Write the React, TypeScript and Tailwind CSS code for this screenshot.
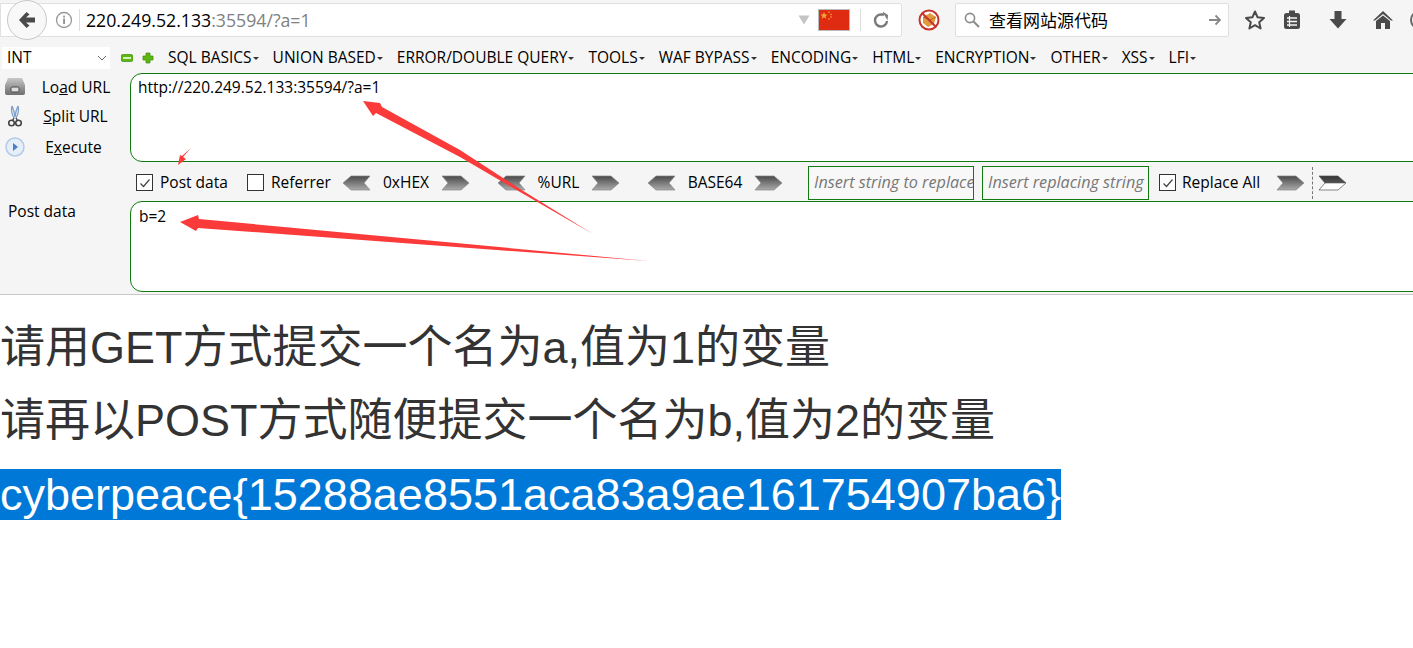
import React from "react";

const menus = ["SQL BASICS", "UNION BASED", "ERROR/DOUBLE QUERY", "TOOLS", "WAF BYPASS", "ENCODING", "HTML", "ENCRYPTION", "OTHER", "XSS", "LFI"];

function Chevron({ dir = "right", hollow = false }: { dir?: "left" | "right"; hollow?: boolean }) {
  const id = `g-${dir}-${hollow ? "h" : "s"}`;
  const pts = dir === "right" ? "1,1 20,1 28,8 20,15 1,15 7,8" : "27,1 8,1 0,8 8,15 27,15 21,8";
  return (
    <svg width="28" height="16" viewBox="0 0 28 16" className="shrink-0">
      <defs>
        <linearGradient id={id} x1="0" y1="0" x2="0" y2="1">
          {hollow ? (
            <>
              <stop offset="0" stopColor="#333" />
              <stop offset="0.5" stopColor="#555" />
              <stop offset="0.55" stopColor="#fff" />
              <stop offset="1" stopColor="#fff" />
            </>
          ) : (
            <>
              <stop offset="0" stopColor="#4a4a4a" />
              <stop offset="1" stopColor="#aaa" />
            </>
          )}
        </linearGradient>
      </defs>
      <polygon points={pts} fill={`url(#${id})`} stroke={hollow ? "#555" : "#888"} strokeWidth="0.7" />
    </svg>
  );
}

function Check({ checked }: { checked?: boolean }) {
  return (
    <span className="w-[17px] h-[17px] border border-[#333] bg-white flex items-center justify-center shrink-0">
      {checked && (
        <svg width="12" height="12" viewBox="0 0 12 12">
          <path d="M1.5 6.5 L4.5 9.5 L10.5 2.5" fill="none" stroke="#444" strokeWidth="1.2" />
        </svg>
      )}
    </span>
  );
}

function Encoder({ label, className }: { label: string; className: string }) {
  return (
    <div className={`flex items-center ${className}`}>
      <Chevron dir="left" />
      <span className="flex-1 text-center">{label}</span>
      <Chevron />
    </div>
  );
}

export default function App() {
  return (
    <div className="relative w-[1413px] h-[648px] overflow-hidden bg-white text-black font-['Open_Sans','Noto_Sans',sans-serif] text-[15.5px]">
      {/* browser toolbar */}
      <div className="h-[43px] bg-[#f5f5f5] pt-[3px] border-[#fafafa]">
        <div className="h-[34px] flex items-center">
          <div className="w-[902px] h-[34px] bg-white border border-[#e0e0e0] rounded-r-[3px] flex items-center shrink-0">
            <div className="w-[40px] h-[40px] ml-[6px] rounded-full bg-[#f8f8f8] border border-[#c8c8c8] flex items-center justify-center shrink-0">
              <svg width="20" height="20" viewBox="0 0 20 20">
                <path d="M9.5 2 L2 10 L9.5 18 L12.5 15.5 L9 12.5 H18 V7.5 H9 L12.5 4.5 Z" fill="#4a4a4a" />
              </svg>
            </div>
            <svg width="18" height="18" viewBox="0 0 18 18" className="ml-[8px] shrink-0">
              <circle cx="9" cy="9" r="7.5" fill="none" stroke="#999" strokeWidth="1.3" />
              <rect x="8.2" y="7.5" width="1.7" height="5.5" fill="#888" />
              <rect x="8.2" y="4.6" width="1.7" height="1.8" fill="#888" />
            </svg>
            <span className="w-px h-[22px] bg-[#ddd] ml-[6px]" />
            <span className="ml-[6px] text-[17.7px]">
              220.249.52.133<span className="text-[#808080]">:35594/?a=1</span>
            </span>
            <div className="ml-auto flex items-center">
              <svg width="12" height="10" viewBox="0 0 12 10" className="mr-[8px]">
                <path d="M0.5 0.5 H11.5 L6 9.5 Z" fill="#c4c4c4" />
              </svg>
              <svg width="32" height="22" viewBox="0 0 32 22" className="mr-[10px]">
                <rect width="32" height="22" fill="#e02b13" />
                <path d="M6 3 l1 2.6 2.6 0 -2.1 1.6 0.8 2.6 -2.3 -1.6 -2.3 1.6 0.8 -2.6 -2.1 -1.6 2.6 0 Z" fill="#f0a83a" />
                <circle cx="11" cy="3" r="0.8" fill="#f0a83a" />
                <circle cx="13" cy="5.5" r="0.8" fill="#f0a83a" />
                <circle cx="13" cy="8" r="0.8" fill="#f0a83a" />
                <circle cx="11" cy="10" r="0.8" fill="#f0a83a" />
                <rect x="0.5" y="0.5" width="31" height="21" fill="none" stroke="#bbb" />
              </svg>
              <span className="w-px h-[22px] bg-[#ddd]" />
              <svg width="18" height="18" viewBox="0 0 18 18" className="mx-[11px]">
                <path d="M15 10 A6 6 0 1 1 9 3.5 H12" fill="none" stroke="#7a7a7a" strokeWidth="2.4" />
                <path d="M10.5 0.5 L16 4 L15.5 9.5 Z" fill="#7a7a7a" />
              </svg>
            </div>
          </div>
          <svg width="22" height="24" viewBox="0 0 22 24" className="ml-[16px] shrink-0">
            <circle cx="11" cy="12" r="9.5" fill="#fff" stroke="#c9322b" strokeWidth="2" />
            <path d="M5 9 L12 5 L18 9 L16 16 L10 19 L5 15 Z" fill="#e0993c" />
            <path d="M5 9 L12 12 L16 16 M12 12 L18 9" fill="none" stroke="#a8691f" strokeWidth="0.9" />
            <path d="M4.5 5.5 L17.5 18.5" stroke="#c9322b" strokeWidth="2" />
          </svg>
          <div className="ml-[15px] w-[274px] h-[34px] bg-white border border-[#e0e0e0] rounded-[2px] flex items-center shrink-0">
            <svg width="18" height="18" viewBox="0 0 18 18" className="ml-[7px] shrink-0">
              <circle cx="7" cy="7" r="4.6" fill="none" stroke="#8a8a8a" strokeWidth="1.6" />
              <path d="M10.5 10.5 L16 16" stroke="#8a8a8a" strokeWidth="2" />
            </svg>
            <span className="ml-[8px] text-[17px] font-['Noto_Sans_CJK_SC',sans-serif]">查看网站源代码</span>
            <svg width="14" height="14" viewBox="0 0 14 14" className="ml-auto mr-[6px]">
              <path d="M1 7 H12 M7.5 2.5 L12 7 L7.5 11.5" fill="none" stroke="#888" strokeWidth="1.8" />
            </svg>
          </div>
          <svg width="22" height="22" viewBox="0 0 22 22" className="ml-[15px] shrink-0">
            <path d="M11 2.5 L13.6 8.3 L20 9 L15.2 13.2 L16.6 19.5 L11 16.2 L5.4 19.5 L6.8 13.2 L2 9 L8.4 8.3 Z" fill="none" stroke="#4a4a4a" strokeWidth="2" strokeLinejoin="round" />
          </svg>
          <span className="w-px h-[22px] bg-[#d4d4d4] ml-[7px]" />
          <svg width="20" height="22" viewBox="0 0 20 22" className="ml-[9px] shrink-0">
            <rect x="2" y="4" width="16" height="16" rx="2.5" fill="#4a4a4a" />
            <rect x="7" y="1.5" width="6" height="4" fill="#4a4a4a" />
            <path d="M5 9 H15 M5 12.5 H15 M5 16 H15" stroke="#f5f5f5" strokeWidth="1.4" />
            <path d="M7.5 7 V18" stroke="#f5f5f5" strokeWidth="1.2" />
          </svg>
          <svg width="20" height="22" viewBox="0 0 20 22" className="ml-[26px] shrink-0">
            <path d="M6.5 2 H13.5 V10 H18.5 L10 19.5 L1.5 10 H6.5 Z" fill="#4a4a4a" />
          </svg>
          <svg width="22" height="22" viewBox="0 0 22 22" className="ml-[24px] shrink-0">
            <path d="M11 2 L21 11.5 L19 11.5 L11 5 L3 11.5 L1 11.5 Z" fill="#4a4a4a" />
            <path d="M11 6.5 L18 12 V20 H13 V14 H9 V20 H4 V12 Z" fill="#4a4a4a" />
          </svg>
          <span className="ml-[16px] w-[20px] h-[20px] rounded-full border-2 border-[#666] shrink-0" />
        </div>
      </div>

      {/* hackbar */}
      <div className="h-[252px] bg-[#f5f5f5] border-b border-[#c8c8c8]">
        <div className="h-[30px] flex items-center">
          <div className="ml-[2px] w-[108px] h-[22px] bg-white flex items-center justify-between pl-[5px] pr-[3px] shrink-0">
            <span>INT</span>
            <svg width="10" height="6" viewBox="0 0 10 6">
              <path d="M1 1 L5 5 L9 1" fill="none" stroke="#666" strokeWidth="1" />
            </svg>
          </div>
          <svg width="12" height="8" viewBox="0 0 12 8" className="ml-[11px] shrink-0">
            <rect width="12" height="7" y="0.5" rx="2" fill="#5cb811" stroke="#3f8a0a" strokeWidth="0.7" />
            <rect x="2" y="3" width="8" height="2" fill="#d5f0b8" />
          </svg>
          <svg width="12" height="12" viewBox="0 0 12 12" className="ml-[9px] shrink-0">
            <path d="M4 1 H8 V4 H11 V8 H8 V11 H4 V8 H1 V4 H4 Z" fill="#5cb811" stroke="#3f8a0a" strokeWidth="0.7" />
          </svg>
          <div className="ml-[14px] flex items-center gap-[14px]">
            {menus.map((m) => (
              <span key={m} className="flex items-center whitespace-nowrap">
                {m}
                <span className="ml-[1px] w-0 h-0 border-x-[3px] border-x-transparent border-t-[3px] border-t-[#333]" />
              </span>
            ))}
          </div>
        </div>

        <div className="flex h-[89px]">
          <div className="w-[130px] shrink-0 flex flex-col">
            <div className="h-[28px] shrink-0 flex items-center justify-center pl-[22px] pt-[2px]">
              <span>Lo<u>a</u>d URL</span>
            </div>
            <div className="h-[30px] shrink-0 flex items-center justify-center pl-[21px] pt-[2px]">
              <span><u>S</u>plit URL</span>
            </div>
            <div className="h-[32px] shrink-0 flex items-center justify-center pl-[17px] pt-[2px]">
              <span>E<u>x</u>ecute</span>
            </div>
          </div>
          <div className="flex-1 -mr-[20px] min-w-0 bg-white border border-[#107c10] rounded-[12px] pl-[7px] pt-[2px]">
            http://220.249.52.133:35594/?a=1
          </div>
        </div>

        <div className="flex items-center h-[39px] pl-[136px] pt-[2px]">
          <Check checked />
          <span className="ml-[7px] w-[68px] whitespace-nowrap">Post data</span>
          <span className="ml-[19px]"><Check /></span>
          <span className="ml-[7px] w-[58px] whitespace-nowrap">Referrer</span>
          <Encoder label="0xHEX" className="ml-[14px] w-[126px]" />
          <Encoder label="%URL" className="ml-[29px] w-[121px]" />
          <Encoder label="BASE64" className="ml-[29px] w-[134px]" />
          <span className="ml-[26px] w-[166px] h-[34px] shrink-0 border border-[#107c10] bg-[#f8f8f8] flex items-center pl-[5px] italic text-[16.2px] text-[#777] overflow-hidden whitespace-nowrap">
            Insert string to replace
          </span>
          <span className="ml-[8px] w-[167px] h-[34px] shrink-0 border border-[#107c10] bg-[#f8f8f8] flex items-center pl-[5px] italic text-[16.2px] text-[#777] overflow-hidden whitespace-nowrap">
            Insert replacing string
          </span>
          <span className="ml-[10px]"><Check checked /></span>
          <span className="ml-[6px] w-[80px] whitespace-nowrap">Replace All</span>
          <span className="ml-[14px]"><Chevron /></span>
          <span className="ml-[8px] h-[32px] border-l border-dashed border-[#777]" />
          <span className="ml-[5px]"><Chevron hollow /></span>
        </div>

        <div className="flex h-[91px]">
          <div className="w-[130px] shrink-0 pl-[8px] leading-[21px]">Post data</div>
          <div className="flex-1 -mr-[20px] min-w-0 bg-white border border-[#107c10] rounded-[12px] pl-[8px] pt-[3px]">
            b=2
          </div>
        </div>
      </div>

      {/* page */}
      <div className="font-['Liberation_Sans','Noto_Sans_CJK_SC',sans-serif] text-[45px] leading-[51px] text-[#333] pt-[27px]">
        <p className="whitespace-nowrap mb-[22px]">请用GET方式提交一个名为a,值为1的变量</p>
        <p className="whitespace-nowrap mb-[23px]">请再以POST方式随便提交一个名为b,值为2的变量</p>
        <p className="whitespace-nowrap"><span className="bg-[#0078d7] text-white inline-block">cyberpeace{"{"}15288ae8551aca83a9ae161754907ba6{"}"}</span></p>
      </div>

      {/* hackbar button icons */}
      <svg width="22" height="19" viewBox="0 0 22 19" className="absolute left-[4px] top-[77px]">
        <defs>
          <linearGradient id="loadg" x1="0" y1="0" x2="0" y2="1">
            <stop offset="0" stopColor="#c8c8c8" />
            <stop offset="1" stopColor="#6e6e6e" />
          </linearGradient>
        </defs>
        <path d="M4 1 H18 L21 8 V16 Q21 18 19 18 H3 Q1 18 1 16 V8 Z" fill="url(#loadg)" />
        <rect x="7" y="10" width="8" height="5" rx="1.5" fill="#ddd" stroke="#444" strokeWidth="1" />
      </svg>
      <svg width="14" height="23" viewBox="0 0 14 23" className="absolute left-[8px] top-[105px]">
        <path d="M4 1 Q2.5 7 6 13 M10 1 Q11.5 7 8 13 M4 1 Q6.5 6 7 12 M10 1 Q7.5 6 7 12" stroke="#7d9fc9" strokeWidth="1.3" fill="none" />
        <circle cx="3.5" cy="18" r="2.8" fill="none" stroke="#444" strokeWidth="1.6" />
        <circle cx="10.5" cy="18" r="2.8" fill="none" stroke="#444" strokeWidth="1.6" />
        <path d="M6 13 L4.5 15.5 M8 13 L9.5 15.5" stroke="#444" strokeWidth="1.4" />
      </svg>
      <svg width="20" height="20" viewBox="0 0 20 20" className="absolute left-[5px] top-[137px]">
        <circle cx="10" cy="10" r="9" fill="#e6eef8" stroke="#b3cbe8" strokeWidth="1.5" />
        <path d="M8 6 L13 10 L8 14 Z" fill="#4a7fc4" />
      </svg>

      {/* red annotation arrows */}
      <svg width="1413" height="648" viewBox="0 0 1413 648" className="absolute left-0 top-0 pointer-events-none">
        <polygon points="593,234 520,189 460,150 382,107 380,103 363,101 373,116 376,113 460,157 520,192" fill="#fb3a3a" />
        <polygon points="648,261 198,228 196,231 180,222 198,215 199,219" fill="#fb3a3a" />
        <polygon points="191,148 183,157 186,159 178,165 180,155 182,156" fill="#fb3a3a" />
      </svg>
    </div>
  );
}
